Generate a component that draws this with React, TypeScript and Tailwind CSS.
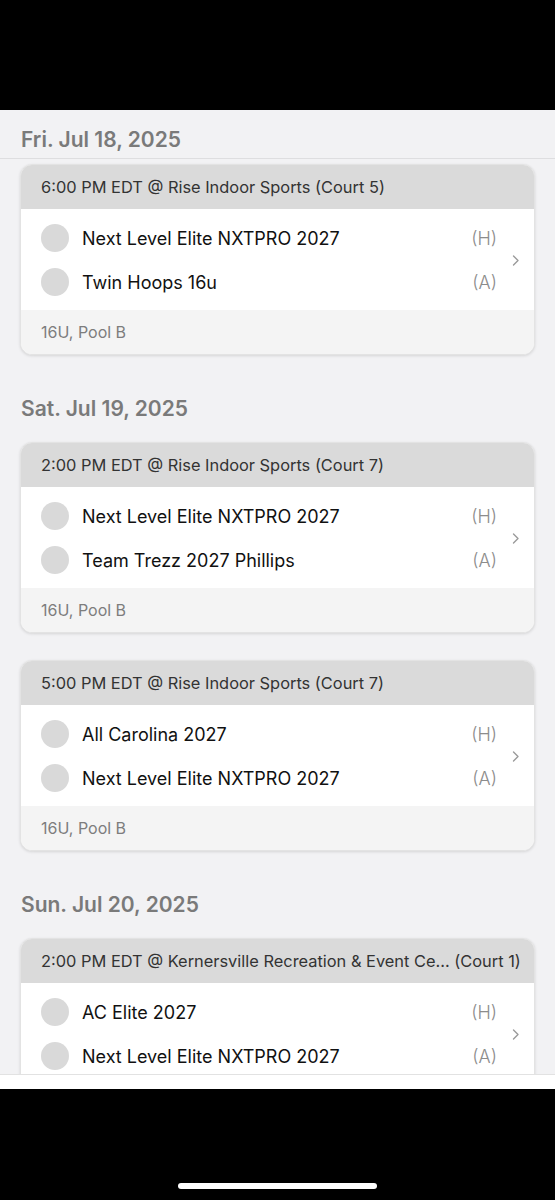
const games = [
  {
    date: 'Fri. Jul 18, 2025',
    items: [
      {
        time: '6:00 PM EDT @ Rise Indoor Sports (Court 5)',
        home: 'Next Level Elite NXTPRO 2027',
        away: 'Twin Hoops 16u',
        pool: '16U, Pool B',
      },
    ],
  },
  {
    date: 'Sat. Jul 19, 2025',
    items: [
      {
        time: '2:00 PM EDT @ Rise Indoor Sports (Court 7)',
        home: 'Next Level Elite NXTPRO 2027',
        away: 'Team Trezz 2027 Phillips',
        pool: '16U, Pool B',
      },
      {
        time: '5:00 PM EDT @ Rise Indoor Sports (Court 7)',
        home: 'All Carolina 2027',
        away: 'Next Level Elite NXTPRO 2027',
        pool: '16U, Pool B',
      },
    ],
  },
  {
    date: 'Sun. Jul 20, 2025',
    items: [
      {
        time: '2:00 PM EDT @ Kernersville Recreation & Event Ce... (Court 1)',
        home: 'AC Elite 2027',
        away: 'Next Level Elite NXTPRO 2027',
        pool: '16U, Pool B',
      },
    ],
  },
];

type Game = (typeof games)[number]['items'][number];

function TeamRow({ name, side }: { name: string; side: string }) {
  return (
    <div className="flex h-[44px] items-center">
      <div className="h-[28px] w-[28px] shrink-0 rounded-full bg-[#d9d9d9]" />
      <span className="ml-[13px] flex-1 truncate text-[18px] text-[#111]">{name}</span>
      <span className="text-[18px] font-light text-[#8c8c8c]">{side}</span>
    </div>
  );
}

function GameCard({ game }: { game: Game }) {
  return (
    <div className="mx-5 overflow-hidden rounded-xl border border-[#e3e3e3] bg-white shadow-[0_1px_3px_rgba(0,0,0,0.12)]">
      {/* time + venue */}
      <div className="flex h-[44px] items-center bg-[#dadada] px-5 text-[16.4px] text-[#333] whitespace-nowrap">
        {game.time}
      </div>

      {/* teams */}
      <div className="flex items-center gap-[15px] pb-[6px] pl-5 pr-[14px] pt-[7px]">
        <div className="flex-1">
          <TeamRow name={game.home} side="(H)" />
          <TeamRow name={game.away} side="(A)" />
        </div>
        <svg width="8" height="11" viewBox="0 0 8 11" fill="none">
          <path d="M1.5 1 L6 5.5 L1.5 10" stroke="#9a9a9a" strokeWidth="1.4" strokeLinecap="round" strokeLinejoin="round" />
        </svg>
      </div>

      {/* division */}
      <div className="flex h-[44px] items-center bg-[#f4f4f4] px-5 text-[16px] text-[#7d7d7d]">
        {game.pool}
      </div>
    </div>
  );
}

export default function App() {
  return (
    <div className="flex h-[1200px] w-[555px] flex-col bg-black font-['Inter',sans-serif]">
      <div className="h-[110px] shrink-0 bg-black" />

      <main className="h-[964px] shrink-0 overflow-hidden bg-[#f2f2f4]">
        {games.map((day, i) => (
          <section key={day.date}>
            {i === 0 ? (
              <div className="h-[49px] border-b border-[#dedee0] px-[21px] pt-[16px] text-[21px] font-semibold leading-[28px] text-[#7a7a7a]">
                {day.date}
              </div>
            ) : (
              <h2 className="mb-[19px] mt-10 px-[21px] text-[21px] font-semibold leading-[28px] text-[#7a7a7a]">
                {day.date}
              </h2>
            )}
            <div className={i === 0 ? 'mt-[5px] space-y-[27px]' : 'space-y-[27px]'}>
              {day.items.map((g) => (
                <GameCard key={g.time} game={g} />
              ))}
            </div>
          </section>
        ))}
      </main>

      <div className="h-[15px] shrink-0 border-t border-[#e2e2e2] bg-white" />

      <div className="flex-1 bg-black pt-[94px]">
        <div className="mx-auto h-[6px] w-[199px] rounded-full bg-white" />
      </div>
    </div>
  );
}
